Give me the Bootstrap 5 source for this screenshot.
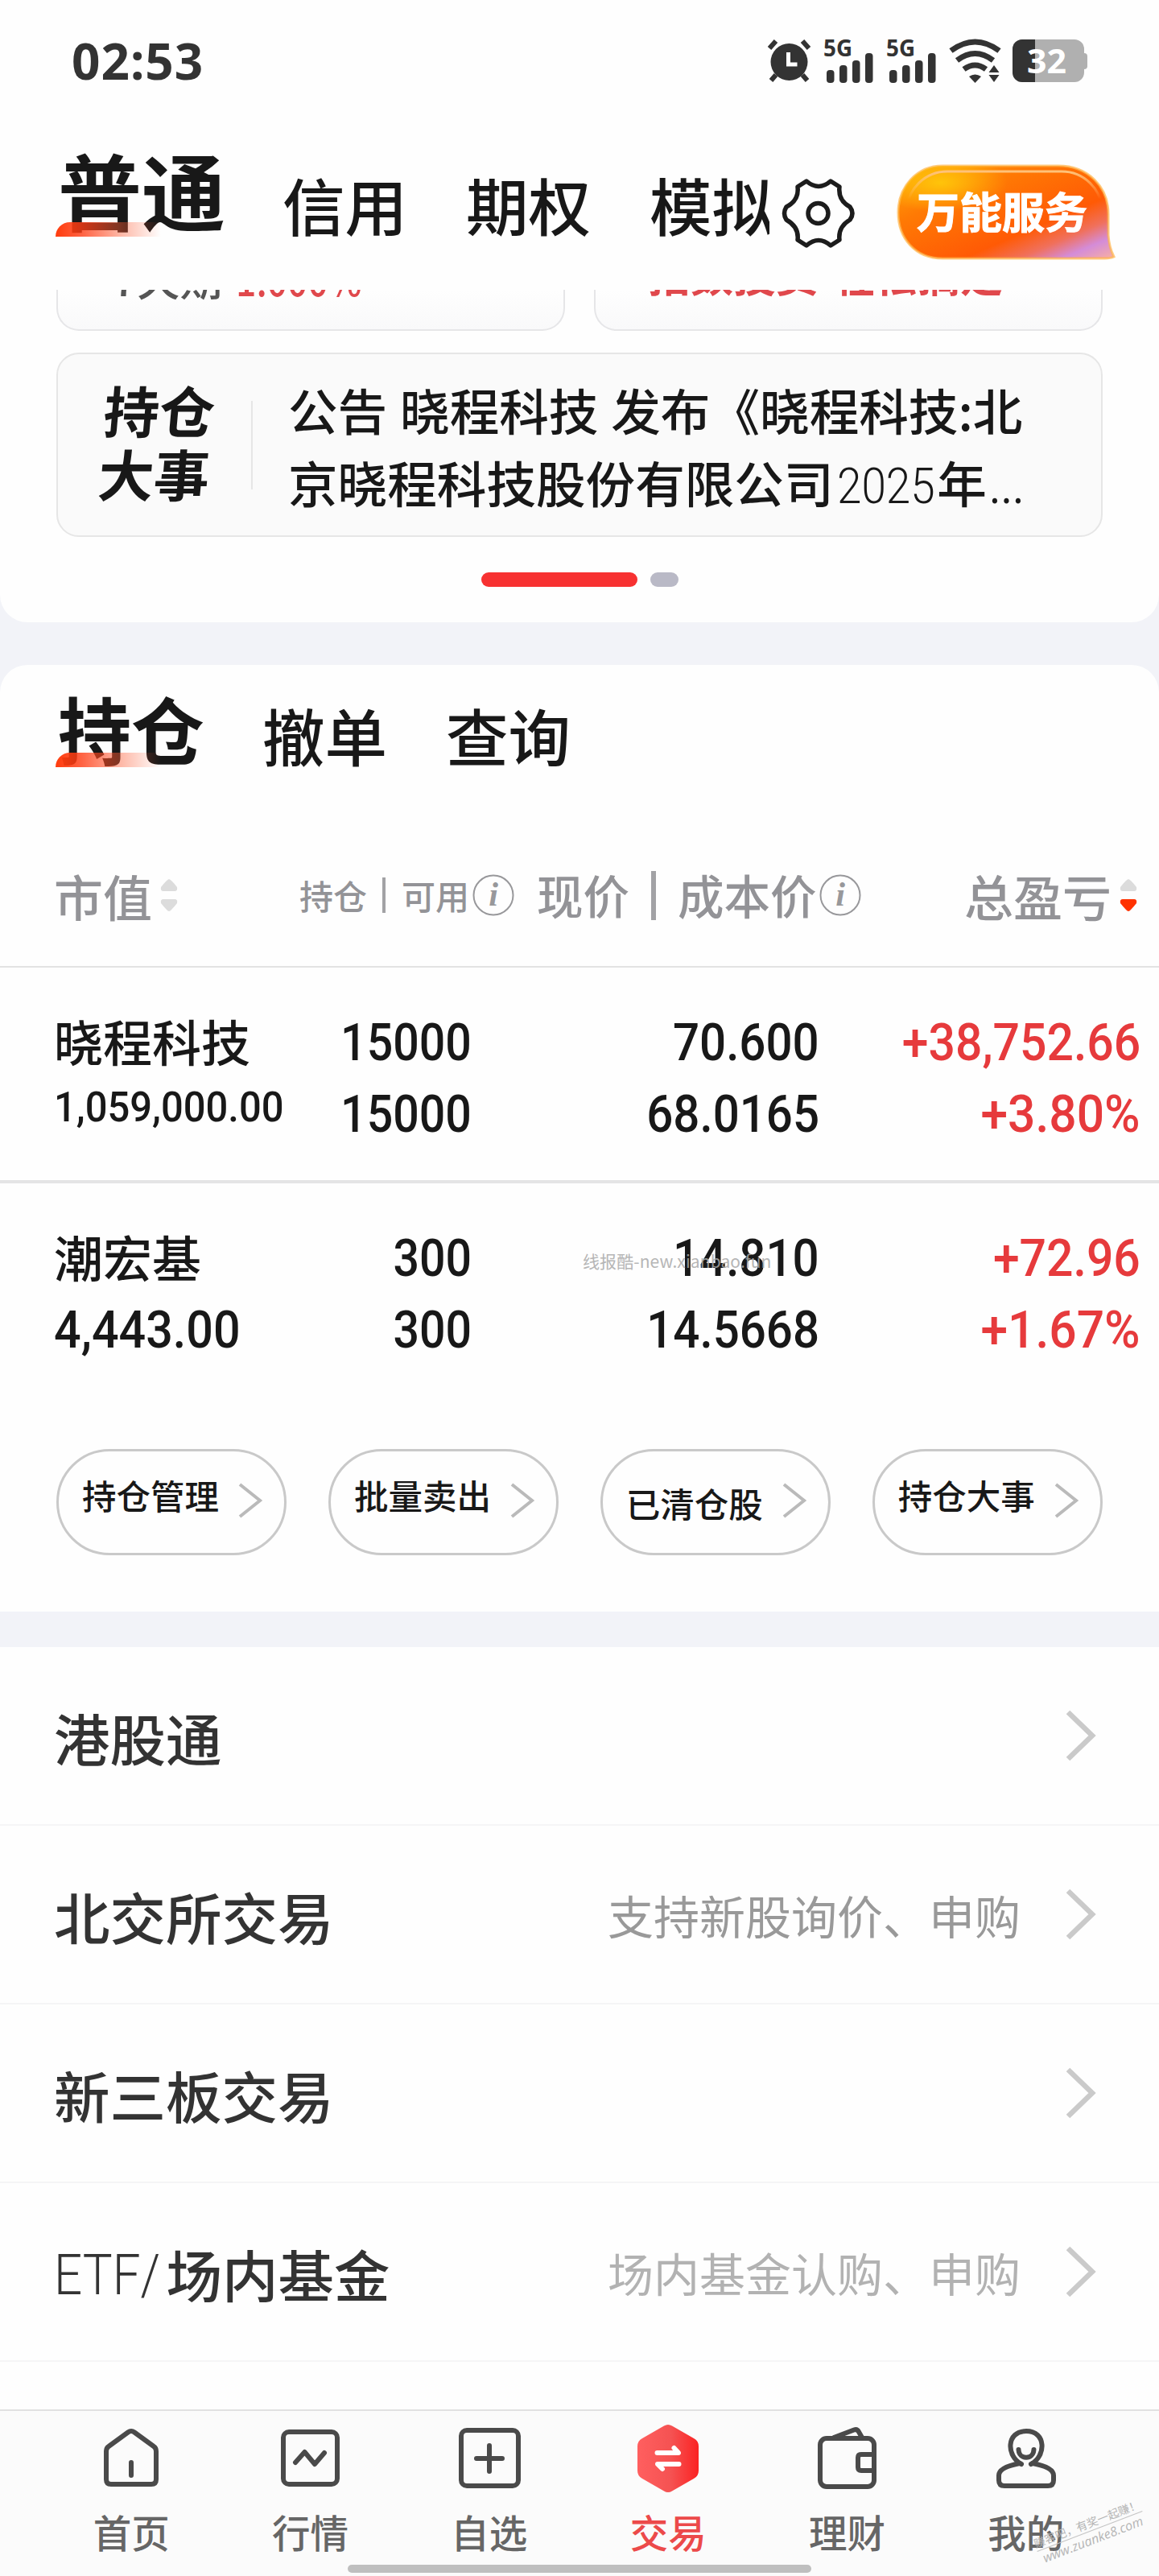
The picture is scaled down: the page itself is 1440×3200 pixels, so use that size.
<!DOCTYPE html>
<html lang="zh-CN">
<head>
<meta charset="utf-8">
<meta name="viewport" content="width=device-width, initial-scale=1">
<title>交易</title>
<link href="https://cdn.jsdelivr.net/npm/bootstrap@5.3.0/dist/css/bootstrap.min.css" rel="stylesheet">
<style>
body{margin:0;background:#f2f3f8;font-family:"Noto Sans CJK SC",sans-serif;font-weight:500;color:#181818;line-height:1}
.screen{width:1440px;height:3200px;overflow:hidden;background:#f2f3f8}
.panel{background:#fefefe}
svg{display:block;flex:none;overflow:visible}
.statusbar{height:149px;padding:0 88px 0 89px}
.clock{font:700 62px/1 "Noto Sans",sans-serif;color:#333;letter-spacing:1px}
.topbar{height:211px;padding-left:72px}
.tab-on{position:relative;font-weight:700;white-space:nowrap}
.tab-on::after{content:"";position:absolute;left:-3px;width:131px;height:18px;border-radius:18px 0 0 0;background:linear-gradient(90deg,#ff3b0c 0%,rgba(255,60,20,.8) 25%,rgba(255,90,50,.45) 60%,rgba(255,120,90,0) 100%)}
.tab-xl{font-size:104px;margin-top:34px;width:206px}
.tab-xl::after{top:93px}
.tab-lg{font-size:91px;margin-top:32px;width:180px}
.tab-lg::after{top:77px}
.tab-off{font-size:77.5px;width:152px;white-space:nowrap;line-height:86px}
.tab-off.clip{width:149px;overflow:hidden}
.promo{height:51px;overflow:hidden;padding:0 70px;gap:36px}
.promo-box{flex:1;height:51px;border:2px solid #e6e6e8;border-top:0;border-radius:0 0 28px 28px;background:linear-gradient(#fefefe,#f9f9fa);overflow:hidden;font-size:53px;white-space:nowrap}
.promo-txt{margin-top:-41px;line-height:53px}
.promo-red{color:#e0484c}
.promo-red.rate{margin-left:17px;display:inline-block;transform:scaleX(.84);transform-origin:left}
.notice{margin:27px 70px 0;height:229px;border:2px solid #e6e6e6;border-radius:28px;background:#fafafa}
.stamp{width:146px;margin:-9px 0 0 54px;font-size:69px;line-height:79px;font-weight:700;transform:skewX(-5deg);white-space:nowrap}
.vline{width:2px;height:110px;background:#e6e6e6;margin-left:40px}
.notice-txt{margin:8px 0 0 44px;font-size:61.6px;line-height:90px;white-space:nowrap}
.thin{display:inline-block;font-family:Roboto,sans-serif;font-weight:300;transform:scaleX(.89);transform-origin:left}
.dots{padding-top:44px;height:106px;gap:16px}
.dots i{display:block;height:18px;border-radius:9px;background:#b9b9c6;width:35px}
.dots i.on{width:194px;background:#f73131}
.p-top{height:773px;border-radius:0 0 34px 34px}
.p-hold{margin-top:53px;height:1176px;border-radius:34px 34px 0 0}
.holdtabs{height:198px;padding-left:72px}
.thead-line{height:178px;border-bottom:2px solid #e3e3e3;padding-left:67px;color:#939397;font-size:61px;white-space:nowrap}
.c1{width:305px}.c2{width:295px;font-size:42px}.c3{width:433px;font-size:57.5px}
.bar-s{width:4px;height:44px;background:#a2a2a5;margin:0 20px 0 19px}
.bar-l{width:6px;height:61px;background:#a2a2a5;margin:0 27px}
.pos{padding:49px 0 0 67px;height:268px;border-bottom:4px solid #e4e4e5;line-height:89px;white-space:nowrap}
.pos.last{border:0;height:330px}
.nm{width:305px;font-size:61px}
.nm>div:first-child{margin-top:-3px;margin-bottom:3px}
.n2{width:214px}.n3{width:432px}.n4{width:399px;color:#e63a3c}
.num{font-family:Roboto,sans-serif;font-weight:500;font-size:64px}
.num span{display:inline-block;transform:scaleX(.91);transform-origin:right}
.n2 span{transform:scaleX(.895)}
.n4 span{transform:scaleX(.92)}
.n4 span.pc{transform:scaleX(.945)}
.num.lft span{transform:scaleX(.925);transform-origin:left}
.num.sm{font-size:52px;line-height:71px}
.num.sm.lft span{transform:scaleX(.94)}
.wm{position:absolute;left:724px;top:1552px;font-size:21px;line-height:28px;color:#aaa;opacity:.85;letter-spacing:.1px;white-space:nowrap;font-weight:400}
.pills{padding:0 70px;gap:51.5px}
.pillbtn{flex:1;height:132px;border:3px solid #c9c9c9;border-radius:66px;padding:0 27px 0 29px;font-size:42.5px;white-space:nowrap}
.pillbtn span{position:relative;top:-9px}
.pillbtn svg{margin-top:-4px}
.p-list{margin-top:44px;height:947px}
.li-row{height:222px;border-bottom:2px solid #f5f5f6;padding:0 78px 0 67px;color:#333;font-size:69.5px;white-space:nowrap}
.li-row b{font-weight:500;padding-top:4px}
.li-row small{font-size:57px;color:#999;margin-right:56px;font-weight:400;padding-top:1px}
.li-row small.dim{color:#b2b2b2}
.tabbar{height:207px;background:#fbfbfb;border-top:2px solid #e1e1e1;padding:0 54px 0 52px}
.tabbar a{flex:1;text-decoration:none;color:#666;font-size:47.5px;line-height:48px}
.tabbar .ic{height:100px;margin-top:9px;display:flex;align-items:center}
.tabbar span{margin-top:17px}
.tabbar a.on{color:#ec4a4a}
.homebar{position:absolute;left:432px;top:3186px;width:576px;height:10px;border-radius:5px;background:#bfbfbf}
.stampwm{position:absolute;left:1284px;top:3124px;width:140px;transform:rotate(-21deg);color:#b5b5b5;font:400 14px/20px "Noto Sans CJK SC",sans-serif;white-space:nowrap;text-align:center}
.stampwm div+div{border-top:1px solid #c4c4c4;font:italic 16px/20px "Open Sans",sans-serif}
</style>
<script src="https://cdn.jsdelivr.net/npm/bootstrap@5.3.0/dist/js/bootstrap.bundle.min.js"></script>
</head>
<body>
<div class="screen position-relative d-flex flex-column">
 <section class="panel p-top flex-shrink-0">
  <div class="statusbar d-flex align-items-center">
   <div class="clock">02:53</div>
   <svg class="ms-auto" width="53" height="54" viewBox="0 0 53 54" fill="#333" stroke="#333"><circle cx="26.500" cy="29" r="23" stroke="none"/><path d="M2 12 10 3M51 12 43 3" stroke-width="6"/><path d="M10 45 4 52M43 45 49 52" stroke-width="6"/><path d="M25.500 17v15h11" fill="none" stroke="#fff" stroke-width="5"/></svg>
   <svg width="64" height="56" viewBox="0 0 64 56" style="margin:3px 0 0 16px" fill="#333"><text x="0" y="22" font-family="Noto Sans" font-weight="700" font-size="28" textLength="36" lengthAdjust="spacingAndGlyphs">5G</text><rect x="4" y="39" width="9.500" height="16" rx="4"/><rect x="20" y="33" width="9.500" height="22" rx="4"/><rect x="36" y="27" width="9.500" height="28" rx="4"/><rect x="52" y="18" width="9.500" height="37" rx="4"/></svg>
   <svg width="64" height="56" viewBox="0 0 64 56" style="margin:3px 0 0 14px" fill="#333"><text x="0" y="22" font-family="Noto Sans" font-weight="700" font-size="28" textLength="36" lengthAdjust="spacingAndGlyphs">5G</text><rect x="4" y="39" width="9.500" height="16" rx="4"/><rect x="20" y="33" width="9.500" height="22" rx="4"/><rect x="36" y="27" width="9.500" height="28" rx="4"/><rect x="52" y="18" width="9.500" height="37" rx="4"/></svg>
   <svg width="66" height="56" viewBox="0 0 66 56" style="margin:3px 0 0 14px" fill="none" stroke="#333" stroke-width="7"><path d="M2.500 15Q32.500-7 62.500 15M10 27Q32.500 10 55 27M18.500 38Q32.500 28 46 38"/><path d="M25 47Q32.500 42 40 47L32.500 55Z" fill="#333" stroke="none"/><path d="M56 34l6.500 9h-13zM56 55l6.500-9h-13z" fill="#333" stroke="none" transform="translate(0 -1)"/></svg>
   <svg width="94" height="54" viewBox="0 0 94 54" style="margin:2px 0 0 13px"><defs><clipPath id="bt"><rect width="89" height="53" rx="12"/></clipPath></defs><rect x="84" y="17" width="9" height="20" rx="4" fill="#b0b0b0"/><g clip-path="url(#bt)"><rect width="94" height="54" fill="#b0b0b0"/><rect width="28" height="54" fill="#333"/></g><text x="18" y="42" font-family="Noto Sans" font-weight="700" font-size="42" textLength="49" lengthAdjust="spacingAndGlyphs" fill="#fff">32</text></svg>
  </div>
  <div class="topbar d-flex">
   <div class="tab-on tab-xl">普通</div>
   <div class="tab-off" style="margin:61px 0 0 73px">信用</div>
   <div class="tab-off" style="margin:61px 0 0 76px">期权</div>
   <div class="tab-off clip" style="margin:61px 0 0 76px">模拟</div>
   <svg width="90" height="86" viewBox="0 0 90 86" style="margin:73px 0 0 16px" fill="none" stroke="#1c1c1c" stroke-width="5.500" stroke-linejoin="round"><path d="M30 3Q45 16 60 3L71 10Q69 27 84 35Q90 43 84 51Q69 60 71 76L60 83Q45 70 30 83L19 76Q21 60 5 51Q0 43 5 35Q21 27 19 10Z"/><circle cx="44.500" cy="43" r="12.500"/></svg>
   <svg width="280" height="126" viewBox="0 0 280 126" style="margin:51px 0 0 49px"><defs><linearGradient id="g1" x1="0" y1="0" x2="1" y2="1"><stop offset="0" stop-color="#ffab08"/><stop offset=".3" stop-color="#ff7a04"/><stop offset=".65" stop-color="#ff5a05"/><stop offset=".78" stop-color="#f0705c"/><stop offset=".88" stop-color="#d48cd8"/><stop offset="1" stop-color="#f9b0a0"/></linearGradient><radialGradient id="g2" cx=".2" cy=".18" r=".32"><stop offset="0" stop-color="#ffc40a"/><stop offset="1" stop-color="#ffc40a" stop-opacity="0"/></radialGradient><linearGradient id="g3" x1="0" y1="0" x2="0" y2="1"><stop offset="0" stop-color="#ffc27a"/><stop offset=".35" stop-color="#ffc27a" stop-opacity="0"/></linearGradient></defs><path d="M60 6H204C241 6 266 32 266 66V92Q267 107 273 119Q269 121 262 121H60C26 121 5 96 5 64S28 6 60 6Z" fill="url(#g1)" stroke="#ffb54a" stroke-opacity=".7" stroke-width="3"/><path d="M60 6H204C241 6 266 32 266 66V121H60C26 121 5 96 5 64S28 6 60 6Z" fill="url(#g2)"/><rect x="16" y="13" width="242" height="98" rx="50" fill="none" stroke="url(#g3)" stroke-width="3"/><text x="28" y="84" font-family="Noto Sans CJK SC" font-weight="700" font-size="53" fill="#fff" stroke="#fff" stroke-width="1">万能服务</text></svg>
  </div>
  <div class="promo d-flex">
   <div class="promo-box"><div class="promo-txt" style="padding-left:68px;color:#555">7天期<span class="promo-red rate">1.000%</span></div></div>
   <div class="promo-box"><div class="promo-txt promo-red" style="padding-left:65px;margin-top:-46px;font-weight:700;word-spacing:5px">指数投资 轻松搞定</div></div>
  </div>
  <div class="notice d-flex align-items-center">
   <div class="stamp">持仓<br>大事</div>
   <div class="vline"></div>
   <div class="notice-txt"><span style="word-spacing:2px">公告 晓程科技 发布《晓程科技:北</span><br>京晓程科技股份有限公司<span class="thin" style="margin-left:4px">2025</span><span style="margin-left:-12px">年</span><span class="thin" style="font-weight:400;margin-left:3px">...</span></div>
  </div>
  <div class="dots d-flex justify-content-center"><i class="on"></i><i></i></div>
 </section>

 <section class="panel p-hold flex-shrink-0">
  <div class="holdtabs d-flex">
   <div class="tab-on tab-lg">持仓</div>
   <div class="tab-off" style="margin:43px 0 0 74px">撤单</div>
   <div class="tab-off" style="margin:43px 0 0 76px">查询</div>
  </div>
  <div class="thead-line d-flex align-items-center">
   <div class="c1 d-flex align-items-center">市值<svg width="22" height="42" viewBox="0 0 22 42" style="margin-left:10px" fill="#dcdcdc"><path d="M11 1Q13 1 21 11Q22 16 18 16H4Q0 16 1 11Q9 1 11 1ZM11 41Q13 41 21 31Q22 26 18 26H4Q0 26 1 31Q9 41 11 41Z"/></svg></div>
   <div class="c2 d-flex align-items-center">持仓<i class="bar-s"></i>可用<svg width="52" height="52" viewBox="0 0 52 52" style="margin-left:4px"><circle cx="26" cy="26" r="24.500" fill="none" stroke="#98989b" stroke-width="2"/><text x="26" y="39" text-anchor="middle" font-family="Liberation Serif" font-style="italic" font-weight="700" font-size="42" fill="#98989b">i</text></svg></div>
   <div class="c3 d-flex align-items-center">现价<i class="bar-l"></i>成本价<svg width="52" height="52" viewBox="0 0 52 52" style="margin-left:3px"><circle cx="26" cy="26" r="24.500" fill="none" stroke="#98989b" stroke-width="2"/><text x="26" y="39" text-anchor="middle" font-family="Liberation Serif" font-style="italic" font-weight="700" font-size="42" fill="#98989b">i</text></svg></div>
   <div class="d-flex align-items-center ms-auto" style="margin-right:27px">总盈亏<svg width="22" height="42" viewBox="0 0 22 42" style="margin-left:10px"><path d="M11 1Q13 1 21 11Q22 16 18 16H4Q0 16 1 11Q9 1 11 1Z" fill="#dcdcdc"/><path d="M11 41Q13 41 21 31Q22 26 18 26H4Q0 26 1 31Q9 41 11 41Z" fill="#ff3200"/></svg></div>
  </div>
  <div class="pos d-flex">
   <div class="nm"><div>晓程科技</div><div class="num sm lft"><span>1,059,000.00</span></div></div>
   <div class="num n2 text-end"><span>15000</span><br><span>15000</span></div>
   <div class="num n3 text-end"><span>70.600</span><br><span>68.0165</span></div>
   <div class="num n4 text-end"><span>+38,752.66</span><br><span class="pc">+3.80%</span></div>
  </div>
  <div class="pos last d-flex">
   <div class="nm"><div>潮宏基</div><div class="num lft"><span>4,443.00</span></div></div>
   <div class="num n2 text-end"><span>300</span><br><span>300</span></div>
   <div class="num n3 text-end"><span>14.810</span><br><span>14.5668</span></div>
   <div class="num n4 text-end"><span>+72.96</span><br><span class="pc">+1.67%</span></div>
  </div>
  <div class="pills d-flex">
   <div class="pillbtn d-flex align-items-center justify-content-between"><span>持仓管理</span><svg width="30" height="44" viewBox="0 0 30 44" fill="none" stroke="#bababa" stroke-width="4"><path d="M2 2 27 22 2 42"/></svg></div>
   <div class="pillbtn d-flex align-items-center justify-content-between"><span>批量卖出</span><svg width="30" height="44" viewBox="0 0 30 44" fill="none" stroke="#bababa" stroke-width="4"><path d="M2 2 27 22 2 42"/></svg></div>
   <div class="pillbtn d-flex align-items-center justify-content-between"><span style="top:1px">已清仓股</span><svg width="30" height="44" viewBox="0 0 30 44" fill="none" stroke="#bababa" stroke-width="4"><path d="M2 2 27 22 2 42"/></svg></div>
   <div class="pillbtn d-flex align-items-center justify-content-between"><span>持仓大事</span><svg width="30" height="44" viewBox="0 0 30 44" fill="none" stroke="#bababa" stroke-width="4"><path d="M2 2 27 22 2 42"/></svg></div>
  </div>
 </section>

 <section class="panel p-list flex-shrink-0">
  <div class="li-row d-flex align-items-center"><b>港股通</b><svg class="ms-auto" width="38" height="64" viewBox="0 0 38 64" fill="none" stroke="#cacaca" stroke-width="6.500"><path d="M3 3 33 32 3 61"/></svg></div>
  <div class="li-row d-flex align-items-center"><b>北交所交易</b><small class="ms-auto">支持新股询价、申购</small><svg width="38" height="64" viewBox="0 0 38 64" fill="none" stroke="#cacaca" stroke-width="6.500"><path d="M3 3 33 32 3 61"/></svg></div>
  <div class="li-row d-flex align-items-center"><b>新三板交易</b><svg class="ms-auto" width="38" height="64" viewBox="0 0 38 64" fill="none" stroke="#cacaca" stroke-width="6.500"><path d="M3 3 33 32 3 61"/></svg></div>
  <div class="li-row d-flex align-items-center"><span class="thin" style="padding-top:10px;margin-right:-9px">ETF/</span><b>场内基金</b><small class="dim ms-auto">场内基金认购、申购</small><svg width="38" height="64" viewBox="0 0 38 64" fill="none" stroke="#cacaca" stroke-width="6.500"><path d="M3 3 33 32 3 61"/></svg></div>
 </section>

 <nav class="tabbar d-flex flex-shrink-0">
  <a class="d-flex flex-column align-items-center"><div class="ic"><svg width="76" height="76" viewBox="0 0 76 76" fill="none" stroke="#4a4a4a" stroke-width="6" stroke-linecap="round" stroke-linejoin="round"><path d="M34 5.500Q38 2.500 42 5.500L66 23Q69 25 69 29V64Q69 70 63 70H13Q7 70 7 64V29Q7 25 10 23ZM38 43V59"/></svg></div><span>首页</span></a>
  <a class="d-flex flex-column align-items-center"><div class="ic"><svg width="76" height="76" viewBox="0 0 76 76" fill="none" stroke="#4a4a4a" stroke-width="6" stroke-linecap="round" stroke-linejoin="round"><rect x="5" y="5" width="67" height="65" rx="7"/><path d="M20 43 31.500 30 44 45 56 31"/></svg></div><span>行情</span></a>
  <a class="d-flex flex-column align-items-center"><div class="ic"><svg width="76" height="76" viewBox="0 0 76 76" fill="none" stroke="#4a4a4a" stroke-width="6" stroke-linecap="round"><rect x="3" y="3" width="71" height="69" rx="7"/><path d="M22 38H54M38 22V54"/></svg></div><span>自选</span></a>
  <a class="on d-flex flex-column align-items-center"><div class="ic"><svg width="78" height="86" viewBox="0 0 78 86"><defs><linearGradient id="hx"><stop offset="0" stop-color="#ff5f5f"/><stop offset=".55" stop-color="#f55252"/><stop offset="1" stop-color="#fb2323"/></linearGradient></defs><path d="M34 2.500Q39-.5 44 2.500L71 18Q77 21 77 28V58Q77 65 71 68L44 83.500Q39 86.500 34 83.500L7 68Q1 65 1 58V28Q1 21 7 18Z" fill="url(#hx)"/><path d="M25.500 36H52L46.500 30M52.500 50H26L32 56" fill="none" stroke="#fff" stroke-width="6" stroke-linecap="round" stroke-linejoin="round"/></svg></div><span>交易</span></a>
  <a class="d-flex flex-column align-items-center"><div class="ic"><svg width="76" height="80" viewBox="0 0 76 80" fill="none" stroke="#4a4a4a" stroke-width="6" stroke-linecap="round" stroke-linejoin="round"><rect x="5" y="15" width="67" height="60" rx="8"/><path d="M22 14 47 4.500Q51 3 53 7L57 14M71 35H56Q52 35 52 39V51Q52 55 56 55H71"/></svg></div><span>理财</span></a>
  <a class="d-flex flex-column align-items-center"><div class="ic"><svg width="78" height="78" viewBox="0 0 78 78" fill="none" stroke="#4a4a4a" stroke-width="6" stroke-linecap="round" stroke-linejoin="round"><path d="M33 46C14 36 14 5 39 5S64 36 45 46"/><path d="M31 45Q5 50 5 60V66Q5 73 12 73H66Q73 73 73 66V60Q73 50 47 45"/><path d="M29.500 28C30 41 48 41 48.500 28"/></svg></div><span>我的</span></a>
 </nav>

 <div class="wm">线报酷-new.xianbao.fun</div>
 <div class="homebar"></div>
 <div class="stampwm"><div>赚客吧，有奖一起赚！</div><div>www.zuanke8.com</div></div>
</div>
</body>
</html>
